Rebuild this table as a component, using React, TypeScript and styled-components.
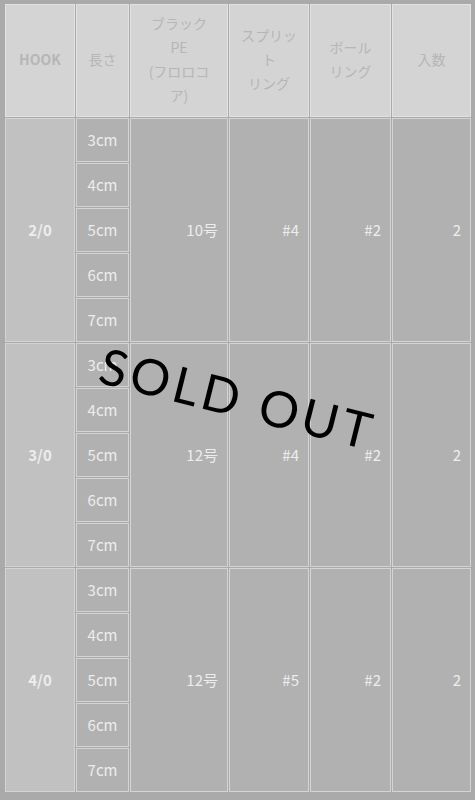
import React from "react";
import styled, { createGlobalStyle } from "styled-components";

type Tone = "head" | "hook" | "body";

interface CellProps {
  $tone: Tone;
  $span?: number;
  $align?: "center" | "right";
}

const GlobalStyle = createGlobalStyle`
  html, body {
    margin: 0;
    padding: 0;
    background: #aaaaaa;
  }
  body {
    font-family: "Noto Sans CJK JP", "Noto Sans", sans-serif;
  }
`;

const Page = styled.div`
  position: relative;
  width: 475px;
  height: 800px;
  padding: 4px 0 0 5px;
  box-sizing: border-box;
  background: #aaaaaa;
  overflow: hidden;
`;

const Grid = styled.div`
  display: grid;
  grid-template-columns: 70px 53px 98px 80px 81px 79px;
  grid-template-rows: 113px repeat(15, 44px);
  gap: 1px;
`;

const Cell = styled.div<CellProps>`
  grid-row: span ${(p: CellProps) => p.$span ?? 1};
  box-sizing: border-box;
  display: flex;
  align-items: center;
  justify-content: ${(p: CellProps) =>
    p.$align === "right" ? "flex-end" : "center"};
  text-align: ${(p: CellProps) => (p.$align === "right" ? "right" : "center")};
  padding: ${(p: CellProps) =>
    p.$align === "right" ? "0 9px 0 0" : p.$tone === "head" ? "0 0 4px" : "0"};
  border: 1px solid
    ${(p: CellProps) => (p.$tone === "head" ? "#e2e2e2" : "#d4d4d4")};
  background: ${(p: CellProps) =>
    p.$tone === "head" ? "#d4d4d4" : p.$tone === "hook" ? "#c1c1c1" : "#b1b1b1"};
  color: ${(p: CellProps) => (p.$tone === "head" ? "#b6b6b6" : "#ededed")};
  font-size: ${(p: CellProps) => (p.$tone === "head" ? "14px" : "15px")};
  line-height: ${(p: CellProps) => (p.$tone === "head" ? "24px" : "20px")};
  font-weight: ${(p: CellProps) => (p.$tone === "hook" ? 700 : 400)};
`;

const HeadBold = styled.span`
  font-weight: 700;
  font-size: 14px;
`;

const SoldOut = styled.div`
  position: absolute;
  left: 238px;
  top: 398px;
  transform: translate(-50%, -50%) rotate(14deg);
  font-family: Lato, "Open Sans", sans-serif;
  font-weight: 400;
  font-size: 50px;
  letter-spacing: 4px;
  color: #000000;
  white-space: nowrap;
  line-height: 1;
`;

interface Group {
  hook: string;
  line: string;
  split: string;
  ball: string;
  qty: string;
}

const groups: Group[] = [
  { hook: "2/0", line: "10号", split: "#4", ball: "#2", qty: "2" },
  { hook: "3/0", line: "12号", split: "#4", ball: "#2", qty: "2" },
  { hook: "4/0", line: "12号", split: "#5", ball: "#2", qty: "2" },
];

const lengths = ["3cm", "4cm", "5cm", "6cm", "7cm"];

const App: React.FunctionComponent<{}> = () => {
  return (
    <Page>
      <GlobalStyle />
      <Grid>
        <Cell $tone="head">
          <HeadBold>HOOK</HeadBold>
        </Cell>
        <Cell $tone="head">長さ</Cell>
        <Cell $tone="head">
          ブラック
          <br />
          PE
          <br />
          (フロロコ
          <br />
          ア)
        </Cell>
        <Cell $tone="head">
          スプリッ
          <br />
          ト
          <br />
          リング
        </Cell>
        <Cell $tone="head">
          ボール
          <br />
          リング
        </Cell>
        <Cell $tone="head">入数</Cell>

        {groups.map((g) => (
          <React.Fragment key={g.hook}>
            <Cell $tone="hook" $span={5}>
              {g.hook}
            </Cell>
            <Cell $tone="body">{lengths[0]}</Cell>
            <Cell $tone="body" $span={5} $align="right">
              {g.line}
            </Cell>
            <Cell $tone="body" $span={5} $align="right">
              {g.split}
            </Cell>
            <Cell $tone="body" $span={5} $align="right">
              {g.ball}
            </Cell>
            <Cell $tone="body" $span={5} $align="right">
              {g.qty}
            </Cell>
            {lengths.slice(1).map((l) => (
              <Cell $tone="body" key={l}>
                {l}
              </Cell>
            ))}
          </React.Fragment>
        ))}
      </Grid>
      <SoldOut>SOLD OUT</SoldOut>
    </Page>
  );
};

export default App;
